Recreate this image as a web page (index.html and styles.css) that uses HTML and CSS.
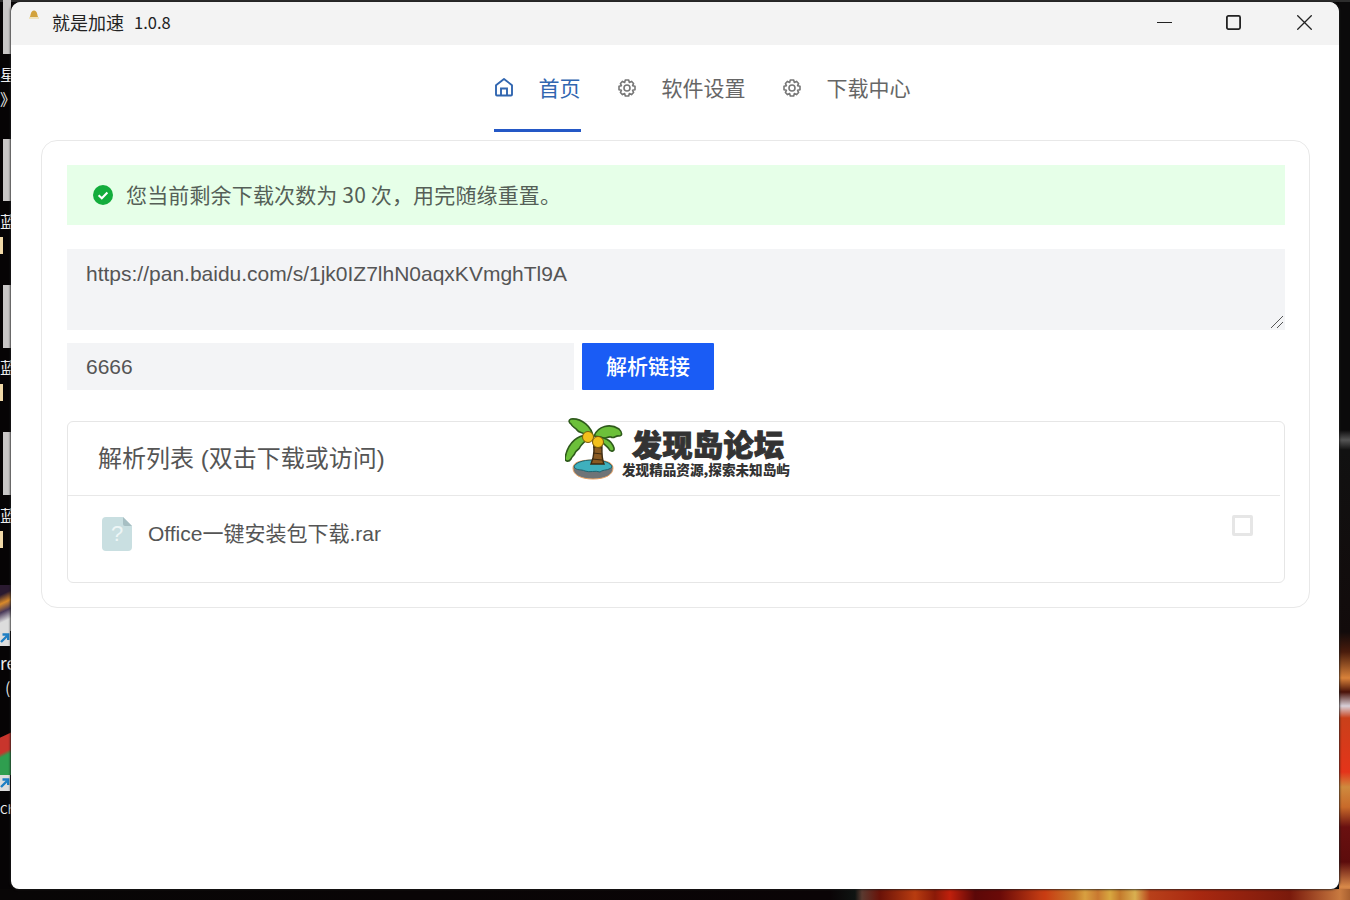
FILE: index.html
```html
<!DOCTYPE html>
<html lang="zh-CN">
<head>
<meta charset="utf-8">
<title>就是加速 1.0.8</title>
<link rel="stylesheet" href="styles.css">
</head>
<body>
<div class="desktop">
  <div class="wall-right"></div>
  <div class="wall-bottom"></div>
  <div class="thumb t1"></div>
  <div class="thumb t2"></div>
  <div class="thumb t3"></div>
  <div class="thumb t4"></div>
  <div class="tan b1"></div>
  <div class="tan b2"></div>
  <div class="tan b3"></div>
  <span class="dlabel l1">星</span>
  <span class="dlabel l2">》</span>
  <span class="dlabel l3">蓝</span>
  <span class="dlabel l4">蓝</span>
  <span class="dlabel l5">蓝</span>
  <span class="dlabel l6">re</span>
  <span class="dlabel l7">(</span>
  <span class="dlabel l8">Ch</span>
  <div class="art a1"></div>
  <div class="art a2"></div>
  <svg class="shortcut s1" viewBox="0 0 10 16"><rect width="10" height="16" fill="#ddd"/><path d="M1 12 L7 6 M2.5 4.5 H8.2 V10" fill="none" stroke="#1f7fc4" stroke-width="2.4"/></svg>
  <svg class="shortcut s2" viewBox="0 0 10 16"><rect width="10" height="16" fill="#ddd"/><path d="M1 12 L7 6 M2.5 4.5 H8.2 V10" fill="none" stroke="#1f7fc4" stroke-width="2.4"/></svg>

  <div class="window">
    <header class="titlebar">
      <svg class="app-icon" viewBox="0 0 10 9"><path d="M.8 7 C1.8 6 1.4 .4 5 .4 C8.6 .4 8.2 6 9.2 7 Z" fill="#d2a23c"/><rect x="0" y="7" width="10" height="2" fill="#efe3bd"/></svg>
      <span class="app-title">就是加速</span>
      <span class="app-ver">1.0.8</span>
      <div class="win-controls">
        <svg class="wc wc-min" viewBox="0 0 15 15"><path d="M0 7.5 H15" stroke="#222" stroke-width="1.2"/></svg>
        <svg class="wc wc-max" viewBox="0 0 15 15"><rect x=".9" y=".9" width="13.2" height="13.2" rx="1.5" fill="none" stroke="#222" stroke-width="1.8"/></svg>
        <svg class="wc wc-close" viewBox="0 0 15 15"><path d="M.3 .3 L14.7 14.7 M14.7 .3 L.3 14.7" stroke="#222" stroke-width="1.3"/></svg>
      </div>
    </header>

    <main class="content">
      <nav class="tabs">
        <a class="tab active">
          <svg class="tab-icon" viewBox="0 0 20 20"><path d="M2 8.2 L10 2 L18 8.2 V17.5 A1 1 0 0 1 17 18.5 H3 A1 1 0 0 1 2 17.5 Z" fill="none" stroke="currentColor" stroke-width="1.9" stroke-linejoin="round"/><path d="M7 18 V11.5 H13 V18" fill="none" stroke="currentColor" stroke-width="1.9"/></svg>
          <span>首页</span>
        </a>
        <a class="tab">
          <svg class="tab-icon gear" viewBox="0 0 20 20"><path d="M8.3 2 H11.7 L12.3 4.4 L14.5 3.4 L16.6 5.5 L15.6 7.7 L18 8.3 V11.7 L15.6 12.3 L16.6 14.5 L14.5 16.6 L12.3 15.6 L11.7 18 H8.3 L7.7 15.6 L5.5 16.6 L3.4 14.5 L4.4 12.3 L2 11.7 V8.3 L4.4 7.7 L3.4 5.5 L5.5 3.4 L7.7 4.4 Z" fill="none" stroke="currentColor" stroke-width="1.6" stroke-linejoin="round"/><circle cx="10" cy="10" r="3" fill="none" stroke="currentColor" stroke-width="1.6"/></svg>
          <span>软件设置</span>
        </a>
        <a class="tab">
          <svg class="tab-icon gear" viewBox="0 0 20 20"><path d="M8.3 2 H11.7 L12.3 4.4 L14.5 3.4 L16.6 5.5 L15.6 7.7 L18 8.3 V11.7 L15.6 12.3 L16.6 14.5 L14.5 16.6 L12.3 15.6 L11.7 18 H8.3 L7.7 15.6 L5.5 16.6 L3.4 14.5 L4.4 12.3 L2 11.7 V8.3 L4.4 7.7 L3.4 5.5 L5.5 3.4 L7.7 4.4 Z" fill="none" stroke="currentColor" stroke-width="1.6" stroke-linejoin="round"/><circle cx="10" cy="10" r="3" fill="none" stroke="currentColor" stroke-width="1.6"/></svg>
          <span>下载中心</span>
        </a>
      </nav>

      <section class="card">
        <div class="alert">
          <svg class="alert-icon" viewBox="0 0 20 20"><circle cx="10" cy="10" r="10" fill="#13ad3c"/><path d="M5.6 10.2 L8.8 13.2 L14.4 7.4" fill="none" stroke="#fff" stroke-width="2.1"/></svg>
          <span>您当前剩余下载次数为 30 次，用完随缘重置。</span>
        </div>

        <div class="url-box">
          <span>https://pan.baidu.com/s/1jk0IZ7lhN0aqxKVmghTl9A</span>
          <svg class="grip" viewBox="0 0 12 12"><path d="M0 12 L12 0 M6 12 L12 6" stroke="#555" stroke-width="1"/></svg>
        </div>

        <div class="code-row">
          <div class="code-input">6666</div>
          <button class="parse-btn">解析链接</button>
        </div>

        <div class="list-panel">
          <h2 class="list-title">解析列表 (双击下载或访问)</h2>
          <div class="list-row">
            <svg class="file-icon" viewBox="0 0 30 34"><path d="M4 0 H21 L30 9 V30 A4 4 0 0 1 26 34 H4 A4 4 0 0 1 0 30 V4 A4 4 0 0 1 4 0 Z" fill="#c9dfe1"/><path d="M21 0 L30 9 H23 A2 2 0 0 1 21 7 Z" fill="#a7bfc3"/></svg>
            <span class="file-q">?</span>
            <span class="file-name">Office一键安装包下载.rar</span>
            <span class="checkbox"></span>
          </div>
        </div>
      </section>
    </main>

    <div class="watermark">
      <svg class="palm" viewBox="0 0 58 62">
        <path d="M8 50 C8 44 16 42 28 42 C40 42 48 44 48 50 C48 57 40 61 28 61 C16 61 8 57 8 50 Z" fill="#6f7477" stroke="#e8a060" stroke-width="1"/>
        <path d="M9 49 C10 45 17 42 28 42 C39 42 46 45 47 49 C43 53 39 51 35 54 C30 52 25 55 20 53 C16 51 12 53 9 49 Z" fill="#3fb0bd" stroke="#1f6470" stroke-width="1"/>
        <path d="M26 46 C29 39 30 31 28 22 L37 24 C37 32 36 39 39 46 Z" fill="#8a5a22" stroke="#3d2a10" stroke-width="1.4"/>
        <path d="M28 29 L37 30 M28 35 L37 36 M27 41 L37 42" stroke="#3d2a10" stroke-width="1.2"/>
        <path d="M28 19 C27 9 17 0 6 1 C3 2 4 5 6 6 C8 10 10 9 12 12 C14 15 17 14 19 16 C22 18 25 18 28 19 Z" fill="#6cc03a" stroke="#2e5a1b" stroke-width="1.6" stroke-linejoin="round"/>
        <path d="M26 18 C14 15 3 24 0 40 C0 44 4 44 6 41 C7 38 9 38 10 35 C11 32 14 32 15 29 C17 25 22 22 26 18 Z" fill="#6cc03a" stroke="#2e5a1b" stroke-width="1.6" stroke-linejoin="round"/>
        <path d="M29 18 C33 8 45 5 54 11 C58 15 57 18 54 18 C51 17 49 21 46 19 C43 18 41 21 38 20 C35 18 32 19 29 18 Z" fill="#6cc03a" stroke="#2e5a1b" stroke-width="1.6" stroke-linejoin="round"/>
        <path d="M33 20 C38 19 46 21 49 30 C50 34 45 34 44 31 C42 28 38 26 33 20 Z" fill="#6cc03a" stroke="#2e5a1b" stroke-width="1.6" stroke-linejoin="round"/>
        <circle cx="23" cy="19" r="5.5" fill="#f3c01c" stroke="#7a5c0c"/>
        <circle cx="33" cy="24" r="5.5" fill="#f3c01c" stroke="#7a5c0c"/>
      </svg>
      <div class="wm-text">
        <span class="wm-main">发现岛论坛</span>
        <span class="wm-sub">发现精品资源,探索未知岛屿</span>
      </div>
    </div>
  </div>
</div>
</body>
</html>
```
FILE: styles.css
```css
* { box-sizing: border-box; }
html, body { margin: 0; padding: 0; height: 100%; overflow: hidden; }
body {
  background: #050505;
  font-family: "Liberation Sans", "Noto Sans CJK SC", sans-serif;
}
.desktop {
  position: relative;
  width: 1350px;
  height: 900px;
  overflow: hidden;
  background: linear-gradient(#2d2d2d 0 2px, #060405 2px);
}
.wall-right {
  position: absolute;
  left: 1339px;
  top: 2px;
  width: 11px;
  height: 898px;
  background: linear-gradient(#0b0a0b 0 428px, #555 438px, #111 448px, #120b0b 630px, #4a1c0c 650px, #d9823a 676px, #4a1208 690px, #d8d0d8 704px, #c9401a 716px, #e4341a 770px, #cf8a3e 785px, #c86a2a 805px, #6a1010 825px, #5c0c0c 860px, #d98a4a 885px, #7a2410 898px);
}
.wall-bottom {
  position: absolute;
  left: 0;
  top: 889px;
  width: 1350px;
  height: 11px;
  background: linear-gradient(90deg, #080606 0, #0a0406 830px, #0f1412 855px, #5a3a30 862px, #6a1208 880px, #b83c10 915px, #8a1a08 935px, #c0200c 950px, #5c0808 975px, #6a0a08 1000px, #c03a12 1040px, #c93c12 1045px, #c87a2a 1075px, #d8a040 1085px, #c97830 1098px, #d8a840 1110px, #c47a2c 1120px, #d9b050 1135px, #b8401a 1150px, #a82810 1200px, #7a1a0c 1290px, #c87a40 1340px, #a86030 1350px);
}
.thumb {
  position: absolute;
  left: 3px;
  width: 8px;
  background: #c8c6c6;
}
.t1 { top: 0; height: 54px; }
.t2 { top: 139px; height: 62px; }
.t3 { top: 285px; height: 63px; }
.t4 { top: 432px; height: 63px; }
.tan {
  position: absolute;
  left: 0;
  width: 3px;
  height: 17px;
  background: #f1d9a8;
}
.b1 { top: 237px; }
.b2 { top: 384px; }
.b3 { top: 531px; }
.dlabel {
  position: absolute;
  left: 0;
  color: #eee;
  font-size: 16px;
  line-height: 18px;
  font-family: "Noto Sans CJK SC", "Liberation Sans", sans-serif;
}
.l1 { top: 65px; }
.l2 { top: 89px; }
.l3 { top: 212px; }
.l4 { top: 358px; }
.l5 { top: 506px; }
.l6 { top: 654px; font-size: 17px; }
.l7 { top: 678px; left: 5px; color: #ddd; }
.l8 { top: 800px; font-size: 12px; }
.art { position: absolute; left: 0; width: 11px; }
.a1 { top: 585px; height: 46px; background: linear-gradient(155deg, #2a1a30 0 20%, #d98a2a 38%, #4a3a5a 55%, #dcdcdc 75%); }
.a2 { top: 725px; height: 50px; background: linear-gradient(155deg, #060405 0 22%, #c8352c 24% 52%, #2f9e4f 60%); }
.shortcut { position: absolute; left: 0; width: 10px; height: 16px; }
.s1 { top: 630px; }
.s2 { top: 775px; }

.window {
  position: absolute;
  left: 11px;
  top: 2px;
  width: 1328px;
  height: 887px;
  background: #fff;
  border-radius: 10px 10px 8px 8px;
  box-shadow: 0 0 2px 1px rgba(30, 30, 30, .75);
  overflow: hidden;
  display: flex;
  flex-direction: column;
  color: #555;
}
.titlebar {
  flex: none;
  height: 43px;
  background: #f3f3f3;
  display: flex;
  align-items: center;
  position: relative;
  padding-left: 41px;
  gap: 10px;
}
.app-icon { position: absolute; left: 18px; top: 8px; width: 10px; height: 9px; }
.app-title, .app-ver {
  margin-top: -4px;
  font-family: "Noto Sans CJK SC", "Liberation Sans", sans-serif;
  font-size: 18px;
  color: #222;
  font-weight: 400;
}
.app-ver { font-size: 16.5px; }
.win-controls {
  margin-left: auto;
  margin-top: -2px;
  display: flex;
  align-items: center;
  gap: 54px;
  padding-right: 27px;
}
.wc { display: block; width: 15px; height: 15px; }
.wc-close { margin-left: 2px; }

.content {
  flex: 1;
  display: flex;
  flex-direction: column;
  padding: 0 29px 0 30px;
}
.tabs {
  display: flex;
  justify-content: center;
  height: 95px;
  padding-left: 53px;
  gap: 36px;
}
.tab {
  display: flex;
  align-items: center;
  gap: 25px;
  height: 87px;
  color: #666;
  font-family: "Noto Sans CJK SC", sans-serif;
  font-size: 21px;
  border-bottom: 3px solid transparent;
}
.tab.active { color: #3166b0; border-bottom-color: #2458c6; }
.tab-icon { width: 20px; height: 20px; flex: none; }
.gear { color: #777; margin-top: 1px; }
.card {
  height: 468px;
  border: 1px solid #e8e8e8;
  border-radius: 16px;
  padding: 24px 24px 24px 25px;
  display: flex;
  flex-direction: column;
}
.alert {
  height: 60px;
  background: #e6ffe8;
  display: flex;
  align-items: center;
  padding-left: 26px;
  padding-bottom: 2px;
  gap: 13px;
  font-family: "Noto Sans CJK SC", sans-serif;
  font-size: 21px;
  letter-spacing: .15px;
  color: #555f57;
}
.alert-icon { width: 20px; height: 20px; margin-top: 2px; }
.url-box {
  position: relative;
  margin-top: 24px;
  height: 81px;
  background: #f3f4f6;
  padding: 12px 19px;
  font-size: 21px;
  line-height: 26px;
  color: #555;
}
.grip { position: absolute; right: 2px; bottom: 2px; width: 12px; height: 12px; }
.code-row {
  margin-top: 13px;
  display: flex;
  gap: 8px;
}
.code-input {
  width: 507px;
  height: 47px;
  background: #f3f4f6;
  padding-left: 19px;
  display: flex;
  align-items: center;
  font-size: 21px;
  color: #555;
}
.parse-btn {
  width: 132px;
  height: 47px;
  border: 0;
  border-radius: 1px;
  background: #1a5cf5;
  color: #fff;
  font-family: "Noto Sans CJK SC", sans-serif;
  font-size: 21px;
  font-weight: 500;
  padding: 0 0 4px;
}
.list-panel {
  margin-top: 31px;
  height: 162px;
  border: 1px solid #e6e6e6;
  border-radius: 6px;
  display: flex;
  flex-direction: column;
}
.list-title {
  margin: 0 4px 0 0;
  height: 74px;
  border-bottom: 1px solid #e8e8e8;
  display: flex;
  align-items: center;
  padding: 0 0 4px 30px;
  font-family: "Liberation Sans", "Noto Sans CJK SC", sans-serif;
  font-weight: 400;
  font-size: 24px;
  color: #555;
}
.list-row {
  position: relative;
  flex: 1;
  display: flex;
  align-items: flex-start;
  padding: 21px 31px 0 34px;
}
.file-icon { width: 30px; height: 34px; flex: none; }
.file-q {
  position: absolute;
  left: 34px;
  top: 21px;
  width: 30px;
  height: 34px;
  display: flex;
  align-items: center;
  justify-content: center;
  color: #eef6f6;
  font-size: 22px;
}
.file-name {
  margin-left: 16px;
  margin-top: 3px;
  font-size: 21px;
  line-height: 28px;
  color: #555;
}
.checkbox {
  margin-left: auto;
  margin-top: -2px;
  width: 21px;
  height: 21px;
  border: 3px solid #e6e6e6;
  border-radius: 2px;
}

.watermark {
  position: absolute;
  left: 554px;
  top: 416px;
  display: flex;
  align-items: flex-start;
}
.palm { width: 58px; height: 62px; flex: none; }
.wm-text {
  display: flex;
  flex-direction: column;
  margin-top: 7px;
  margin-left: -1px;
}
.wm-main {
  margin-left: 10px;
  font-family: "Noto Sans CJK SC", sans-serif;
  font-size: 30px;
  line-height: 36px;
  font-weight: 900;
  color: #333;
  -webkit-text-stroke: 1px #333;
  letter-spacing: 0.5px;
}
.wm-sub {
  font-family: "Noto Sans CJK SC", sans-serif;
  font-size: 13.6px;
  line-height: 16px;
  font-weight: 900;
  color: #333;
  white-space: nowrap;
}
```
